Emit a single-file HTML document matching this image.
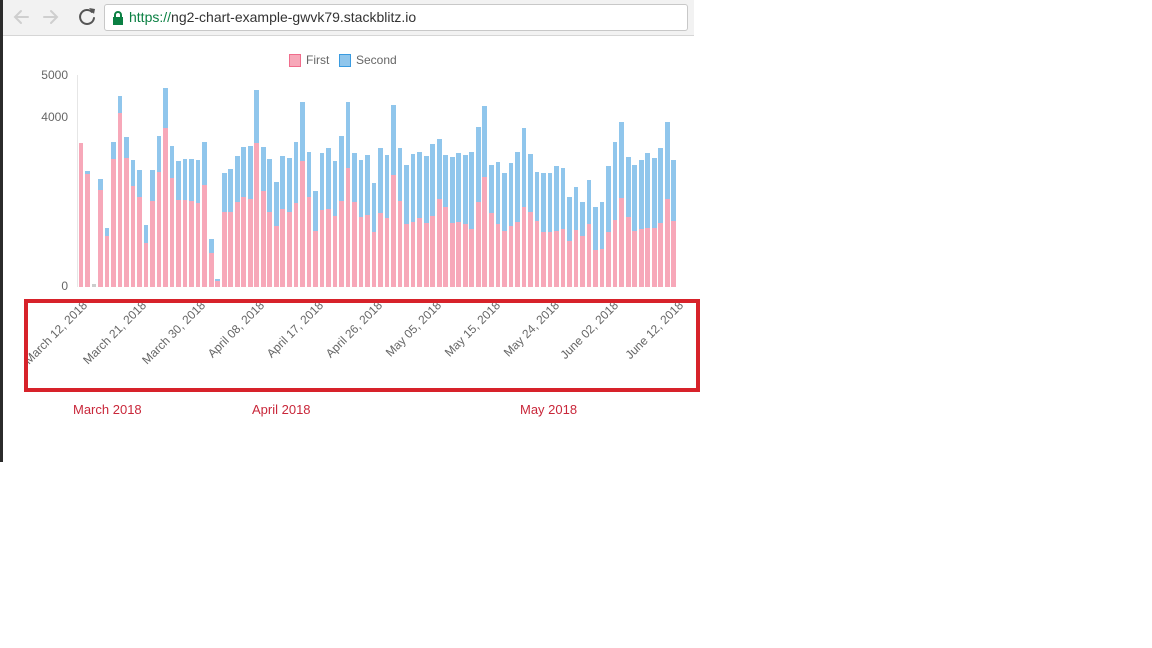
<!DOCTYPE html>
<html><head><meta charset="utf-8"><style>
body{margin:0;width:1152px;height:648px;background:#fff;position:relative;overflow:hidden;font-family:"Liberation Sans",sans-serif}
#left{position:absolute;left:0;top:0;width:3px;height:462px;background:#2b2b2b}
#chrome{position:absolute;left:3px;top:0;width:691px;height:35px;background:#f2f2f2;border-bottom:1px solid #d6d6d6}
#addr{position:absolute;left:101px;top:4px;width:582px;height:25px;background:#fff;border:1px solid #c8c8c8;border-radius:3px;font-size:14px;line-height:25px;color:#333}
#bars{position:absolute;left:78.5px;top:0;height:287px;display:flex;align-items:flex-end}
#bars div{width:4.7px;margin-right:1.83px;background:#90c6ec;display:flex;flex-direction:column;justify-content:flex-end}
#bars div i{display:block;background:#f7a8b9}
.yl{position:absolute;font-size:12px;color:#666;text-align:right;width:40px;left:28px}
.red{position:absolute;top:402px;color:#c9273a;font-size:13px}
</style></head><body>
<div id="left"></div>
<div id="chrome">
<svg width="100" height="35" style="position:absolute;left:0;top:0">
<g fill="none" stroke-width="2" stroke-linecap="round">
<path d="M25 17H13M18 11l-6 6 6 6" stroke="#cfcfcf"/>
<path d="M41 17h12M48 11l6 6-6 6" stroke="#cfcfcf"/>
<path d="M89 12a7 7 0 1 0 2 6" stroke="#555"/></g>
<path d="M86 8l6 1-1 5z" fill="#555"/>
</svg>
<div id="addr"><svg width="12" height="14" style="position:absolute;left:7px;top:6px"><rect x="1" y="6" width="10" height="8" fill="#0b8043"/><path d="M3 6V4a3 3 0 0 1 6 0v2" stroke="#0b8043" stroke-width="2" fill="none"/></svg><span style="position:absolute;left:24px"><span style="color:#0b8043">https://</span>ng2-chart-example-gwvk79.stackblitz.io</span></div>
</div>
<div style="position:absolute;left:289px;top:54px;width:10px;height:11px;background:#f7a8b9;border:1px solid #f06d8c"></div>
<div style="position:absolute;left:306px;top:53px;font-size:12px;color:#666">First</div>
<div style="position:absolute;left:339px;top:54px;width:10px;height:11px;background:#90c6ec;border:1px solid #3a9be0"></div>
<div style="position:absolute;left:356px;top:53px;font-size:12px;color:#666">Second</div>
<div class="yl" style="top:68px">5000</div>
<div class="yl" style="top:110px">4000</div>
<div class="yl" style="top:279px">0</div>
<div style="position:absolute;left:77px;top:75px;width:1px;height:212px;background:#e6e6e6"></div>
<div id="bars">
<div style="height:144px"><i style="height:144px"></i></div><div style="height:116px"><i style="height:113px"></i></div><div style="height:3px;background:#ccc"><i style="height:0"></i></div><div style="height:108px"><i style="height:97px"></i></div><div style="height:59px"><i style="height:51px"></i></div><div style="height:145px"><i style="height:128px"></i></div><div style="height:191px"><i style="height:174px"></i></div><div style="height:150px"><i style="height:129px"></i></div><div style="height:127px"><i style="height:101px"></i></div><div style="height:117px"><i style="height:90px"></i></div>
<div style="height:62px"><i style="height:44px"></i></div><div style="height:117px"><i style="height:86px"></i></div><div style="height:151px"><i style="height:115px"></i></div><div style="height:199px"><i style="height:159px"></i></div><div style="height:141px"><i style="height:109px"></i></div><div style="height:126px"><i style="height:87px"></i></div><div style="height:128px"><i style="height:87px"></i></div><div style="height:128px"><i style="height:86px"></i></div><div style="height:127px"><i style="height:84px"></i></div><div style="height:145px"><i style="height:102px"></i></div>
<div style="height:48px"><i style="height:34px"></i></div><div style="height:8px"><i style="height:6px"></i></div><div style="height:114px"><i style="height:75px"></i></div><div style="height:118px"><i style="height:75px"></i></div><div style="height:131px"><i style="height:85px"></i></div><div style="height:140px"><i style="height:90px"></i></div><div style="height:141px"><i style="height:88px"></i></div><div style="height:197px"><i style="height:144px"></i></div><div style="height:140px"><i style="height:96px"></i></div><div style="height:128px"><i style="height:75px"></i></div>
<div style="height:105px"><i style="height:61px"></i></div><div style="height:131px"><i style="height:78px"></i></div><div style="height:129px"><i style="height:75px"></i></div><div style="height:145px"><i style="height:84px"></i></div><div style="height:185px"><i style="height:126px"></i></div><div style="height:135px"><i style="height:90px"></i></div><div style="height:96px"><i style="height:56px"></i></div><div style="height:134px"><i style="height:77px"></i></div><div style="height:139px"><i style="height:78px"></i></div><div style="height:126px"><i style="height:71px"></i></div>
<div style="height:151px"><i style="height:86px"></i></div><div style="height:185px"><i style="height:119px"></i></div><div style="height:134px"><i style="height:85px"></i></div><div style="height:127px"><i style="height:70px"></i></div><div style="height:132px"><i style="height:72px"></i></div><div style="height:104px"><i style="height:55px"></i></div><div style="height:139px"><i style="height:74px"></i></div><div style="height:132px"><i style="height:69px"></i></div><div style="height:182px"><i style="height:112px"></i></div><div style="height:139px"><i style="height:86px"></i></div>
<div style="height:122px"><i style="height:63px"></i></div><div style="height:133px"><i style="height:65px"></i></div><div style="height:135px"><i style="height:69px"></i></div><div style="height:131px"><i style="height:64px"></i></div><div style="height:143px"><i style="height:71px"></i></div><div style="height:148px"><i style="height:88px"></i></div><div style="height:132px"><i style="height:80px"></i></div><div style="height:130px"><i style="height:64px"></i></div><div style="height:134px"><i style="height:65px"></i></div><div style="height:132px"><i style="height:63px"></i></div>
<div style="height:135px"><i style="height:58px"></i></div><div style="height:160px"><i style="height:85px"></i></div><div style="height:181px"><i style="height:110px"></i></div><div style="height:122px"><i style="height:74px"></i></div><div style="height:125px"><i style="height:63px"></i></div><div style="height:114px"><i style="height:56px"></i></div><div style="height:124px"><i style="height:61px"></i></div><div style="height:135px"><i style="height:65px"></i></div><div style="height:159px"><i style="height:80px"></i></div><div style="height:133px"><i style="height:75px"></i></div>
<div style="height:115px"><i style="height:66px"></i></div><div style="height:114px"><i style="height:55px"></i></div><div style="height:114px"><i style="height:55px"></i></div><div style="height:121px"><i style="height:56px"></i></div><div style="height:119px"><i style="height:58px"></i></div><div style="height:90px"><i style="height:46px"></i></div><div style="height:100px"><i style="height:57px"></i></div><div style="height:85px"><i style="height:51px"></i></div><div style="height:107px"><i style="height:63px"></i></div><div style="height:80px"><i style="height:37px"></i></div>
<div style="height:85px"><i style="height:38px"></i></div><div style="height:121px"><i style="height:55px"></i></div><div style="height:145px"><i style="height:67px"></i></div><div style="height:165px"><i style="height:89px"></i></div><div style="height:130px"><i style="height:70px"></i></div><div style="height:122px"><i style="height:56px"></i></div><div style="height:127px"><i style="height:58px"></i></div><div style="height:134px"><i style="height:59px"></i></div><div style="height:129px"><i style="height:59px"></i></div><div style="height:139px"><i style="height:64px"></i></div>
<div style="height:165px"><i style="height:88px"></i></div><div style="height:127px"><i style="height:66px"></i></div>
</div>
<svg width="1152" height="648" style="position:absolute;left:0;top:0">
<g font-family="Liberation Sans, sans-serif" font-size="12" fill="#666" text-anchor="end">
<text transform="translate(88,306) rotate(-45)">March 12, 2018</text>
<text transform="translate(147,306) rotate(-45)">March 21, 2018</text>
<text transform="translate(206,306) rotate(-45)">March 30, 2018</text>
<text transform="translate(265,306) rotate(-45)">April 08, 2018</text>
<text transform="translate(324,306) rotate(-45)">April 17, 2018</text>
<text transform="translate(383,306) rotate(-45)">April 26, 2018</text>
<text transform="translate(442,306) rotate(-45)">May 05, 2018</text>
<text transform="translate(501,306) rotate(-45)">May 15, 2018</text>
<text transform="translate(560,306) rotate(-45)">May 24, 2018</text>
<text transform="translate(619,306) rotate(-45)">June 02, 2018</text>
<text transform="translate(684,306) rotate(-45)">June 12, 2018</text>
</g>
<rect x="26" y="301" width="672" height="89" fill="none" stroke="#d7222a" stroke-width="4"/>
</svg>
<div class="red" style="left:73px">March 2018</div>
<div class="red" style="left:252px">April 2018</div>
<div class="red" style="left:520px">May 2018</div>
</body></html>
